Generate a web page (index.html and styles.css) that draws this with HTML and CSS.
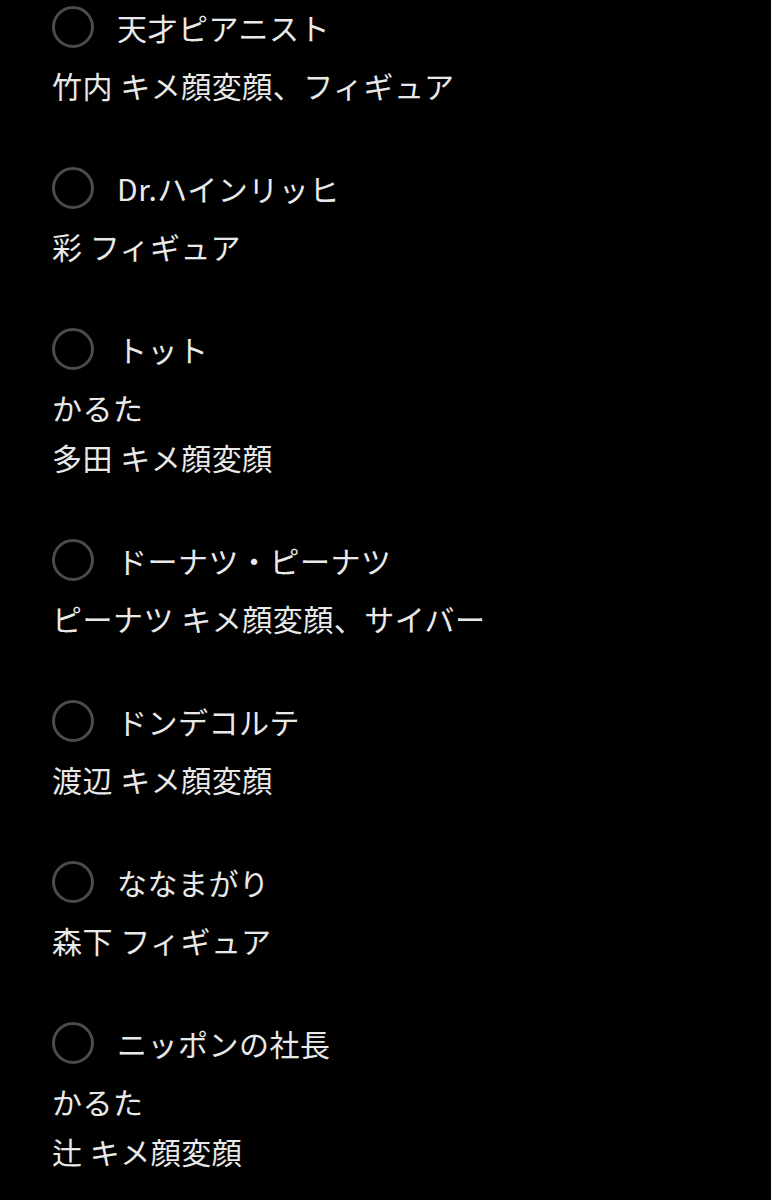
FILE: index.html
```html
<!DOCTYPE html>
<html lang="ja">
<head>
<meta charset="utf-8">
<link rel="stylesheet" href="styles.css">
</head>
<body>
<div class="list">
  <div class="item">
    <div class="title-row"><span class="radio"></span><span class="title">天才ピアニスト</span></div>
    <div class="sub">竹内 キメ顔変顔、フィギュア</div>
  </div>
  <div class="item">
    <div class="title-row"><span class="radio"></span><span class="title">Dr.ハインリッヒ</span></div>
    <div class="sub">彩 フィギュア</div>
  </div>
  <div class="item">
    <div class="title-row"><span class="radio"></span><span class="title">トット</span></div>
    <div class="sub">かるた</div>
    <div class="sub">多田 キメ顔変顔</div>
  </div>
  <div class="item">
    <div class="title-row"><span class="radio"></span><span class="title">ドーナツ・ピーナツ</span></div>
    <div class="sub">ピーナツ キメ顔変顔、サイバー</div>
  </div>
  <div class="item">
    <div class="title-row"><span class="radio"></span><span class="title">ドンデコルテ</span></div>
    <div class="sub">渡辺 キメ顔変顔</div>
  </div>
  <div class="item">
    <div class="title-row"><span class="radio"></span><span class="title">ななまがり</span></div>
    <div class="sub">森下 フィギュア</div>
  </div>
  <div class="item">
    <div class="title-row"><span class="radio"></span><span class="title">ニッポンの社長</span></div>
    <div class="sub">かるた</div>
    <div class="sub">辻 キメ顔変顔</div>
  </div>
</div>
</body>
</html>
```
FILE: styles.css
```css
html, body {
  margin: 0;
  padding: 0;
  background: #000;
}
body {
  font-family: "Noto Sans CJK JP", "Noto Sans", sans-serif;
  color: #e9e9e9;
  font-size: 30px;
  letter-spacing: 0.5px;
}
.list {
  display: flex;
  flex-direction: column;
  gap: 45px;
  padding-left: 52px;
  margin-top: -6px;
}
.item {
  display: flex;
  flex-direction: column;
}
.title-row {
  display: flex;
  align-items: center;
  height: 66px;
  gap: 23px;
}
.radio {
  box-sizing: border-box;
  width: 42px;
  height: 42px;
  border: 3px solid #4b4b4b;
  border-radius: 50%;
  flex: none;
}
.title {
  line-height: 1;
}
.sub {
  line-height: 50px;
  height: 50px;
}
```
